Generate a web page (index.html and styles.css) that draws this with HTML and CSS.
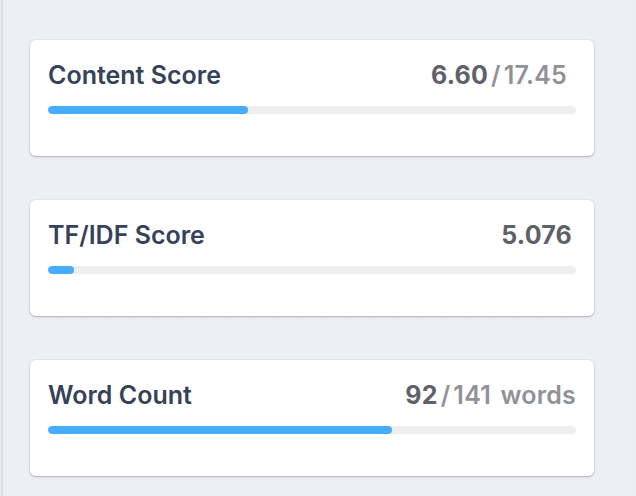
FILE: index.html
```html
<!DOCTYPE html>
<html lang="en">
<head>
<meta charset="utf-8">
<title>Scores</title>
<link rel="stylesheet" href="styles.css">
</head>
<body>
<div class="panel">
  <div class="stack">
    <div class="card card-ghost"></div>
    <section class="card">
      <div class="card-head">
        <h2 class="title">Content Score</h2>
        <div class="value value-pad"><span class="main">6.60</span><span class="sep">/</span><span class="sub">17.45</span></div>
      </div>
      <div class="track"><div class="fill" style="width:37.8%"></div></div>
    </section>
    <section class="card">
      <div class="card-head">
        <h2 class="title">TF/IDF Score</h2>
        <div class="value value-pad-sm"><span class="main">5.076</span></div>
      </div>
      <div class="track"><div class="fill" style="width:5%"></div></div>
    </section>
    <section class="card">
      <div class="card-head">
        <h2 class="title">Word Count</h2>
        <div class="value"><span class="main">92</span><span class="sep">/</span><span class="sub">141 words</span></div>
      </div>
      <div class="track"><div class="fill" style="width:65.2%"></div></div>
    </section>
  </div>
</div>
</body>
</html>
```

FILE: styles.css
```css
html, body {
  margin: 0;
  padding: 0;
  height: 100%;
  overflow: hidden;
}
body {
  background: #eceef1;
  font-family: Inter, "Noto Sans", "Liberation Sans", sans-serif;
}
.panel {
  display: flex;
  flex-direction: column;
  height: 100%;
  border-left: 2px solid #dcdee2;
  margin-left: 1px;
  box-sizing: border-box;
  padding: 0 42px 0 27px;
  background-color: #eceef1;
  background-image: radial-gradient(rgba(255,255,255,0.35) 0.6px, transparent 0.8px);
  background-size: 3px 3px;
}
.stack {
  display: flex;
  flex-direction: column;
  gap: 44px;
  margin-top: -120px;
}
.card {
  flex: none;
  background: #ffffff;
  border-radius: 6px;
  height: 116px;
  box-sizing: border-box;
  padding: 18px 18px 0 18px;
  box-shadow: 0 1px 2px rgba(40, 50, 70, 0.3), 0 0 0 1px rgba(40, 50, 70, 0.04);
}
.card-head {
  display: flex;
  justify-content: space-between;
  align-items: baseline;
  height: 34px;
}
.title {
  margin: 0;
  font-size: 25px;
  font-weight: 600;
  color: #364258;
  line-height: 34px;
  letter-spacing: 0px;
}
.value {
  font-size: 25px;
  font-weight: 600;
  line-height: 34px;
  display: flex;
  align-items: baseline;
  letter-spacing: 0.2px;
  word-spacing: 3px;
}
.value-pad { padding-right: 9px; }
.value-pad-sm { padding-right: 4px; }
.main { color: #5f6168; font-weight: 700; }
.sep { color: #909298; margin: 0 3px; }
.sub { color: #909298; }
.track {
  margin-top: 14px;
  height: 8px;
  border-radius: 4px;
  background: #edeef0;
  overflow: hidden;
}
.fill {
  height: 100%;
  background: #45adfb;
  border-radius: 4px;
}
```
